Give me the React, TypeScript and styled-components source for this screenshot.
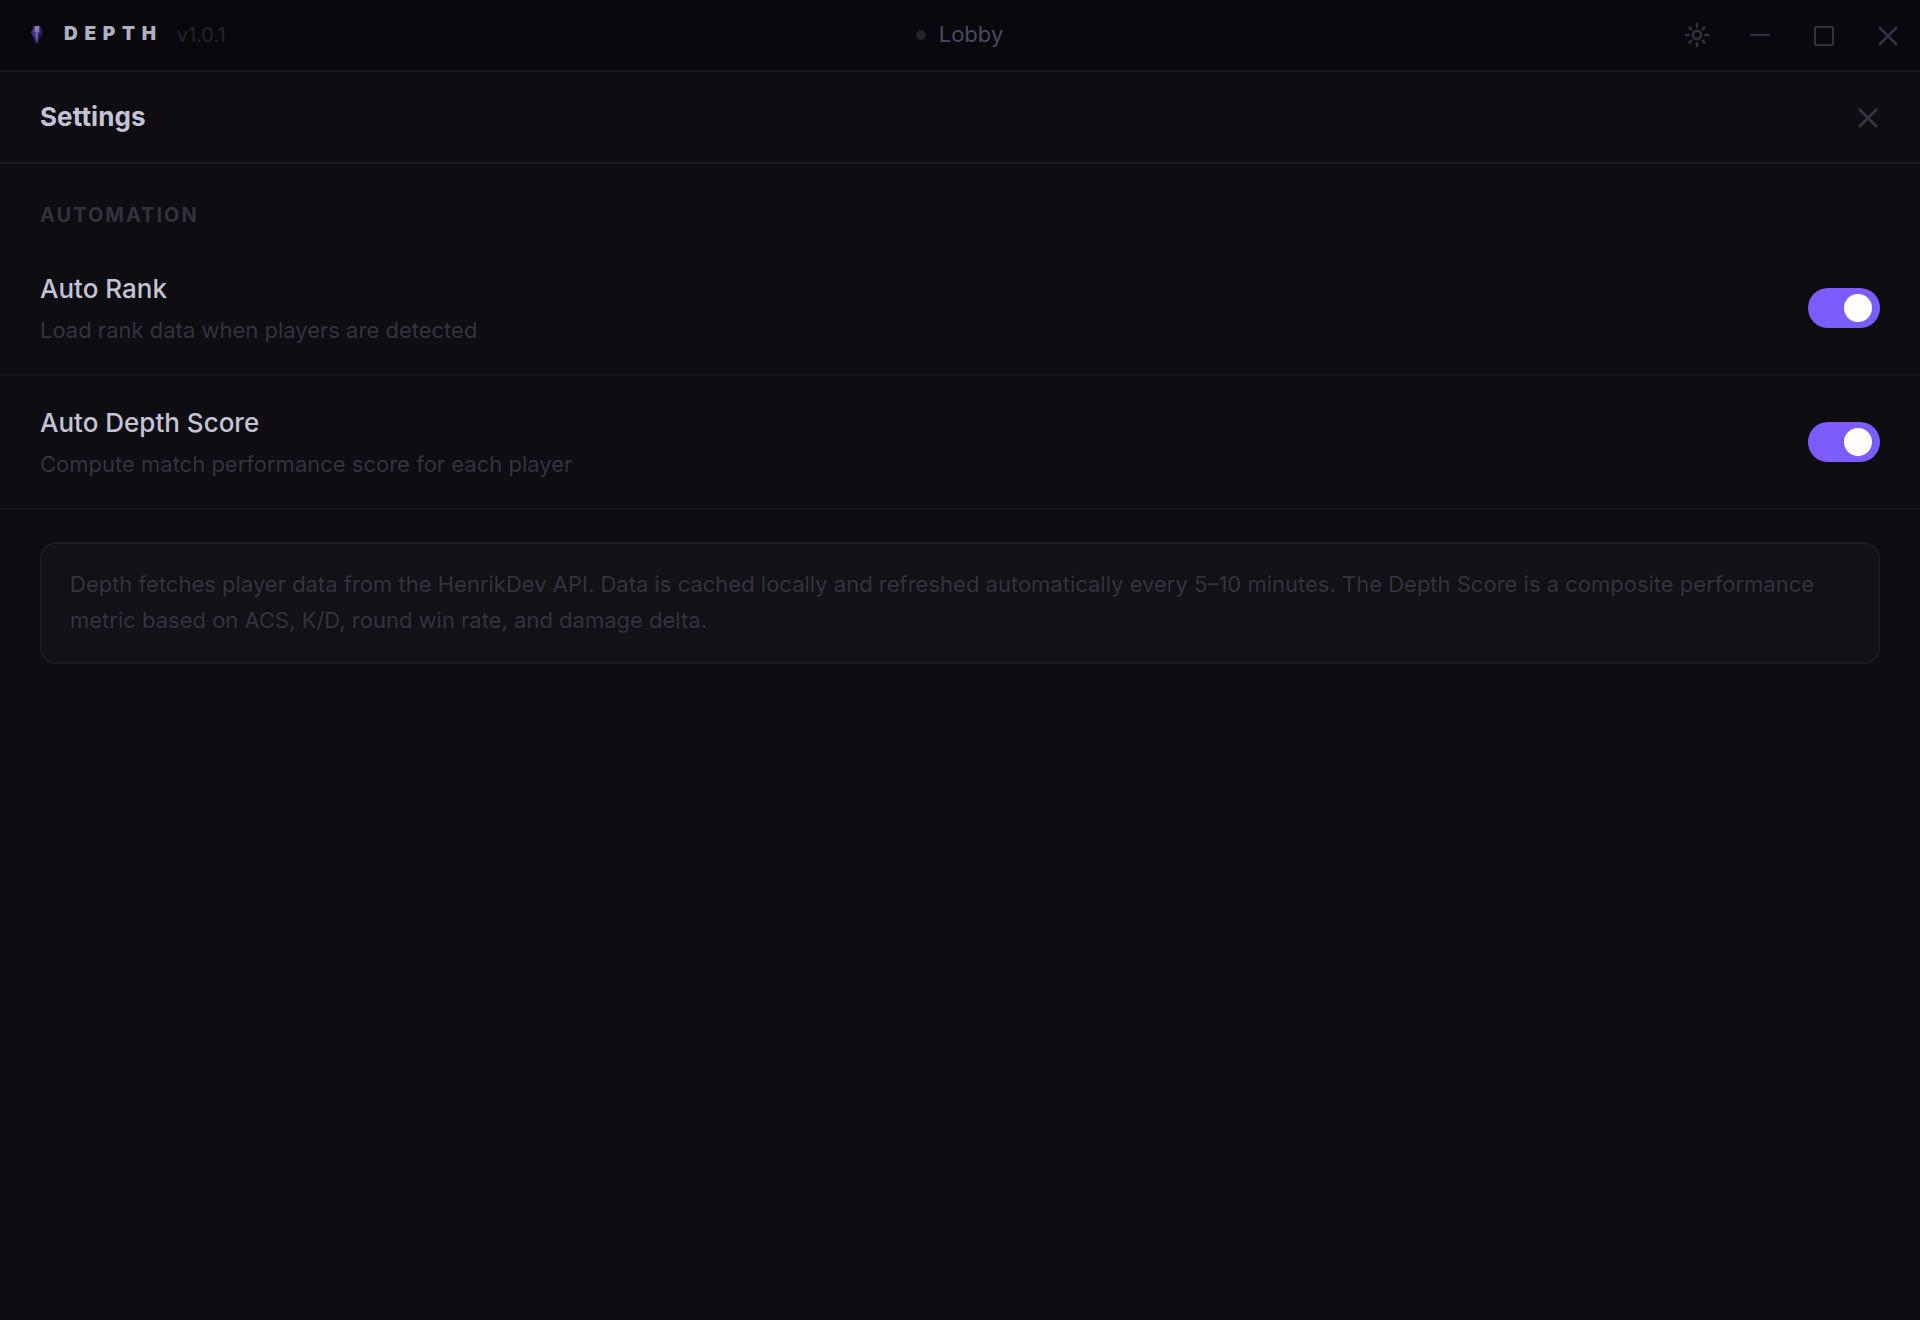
import React, { useState } from "react";
import styled, { createGlobalStyle } from "styled-components";

const GlobalStyle = createGlobalStyle`
  *, *::before, *::after { box-sizing: border-box; }
  html, body { margin: 0; padding: 0; background: #0d0d12; }
  body { font-family: Inter, "Liberation Sans", sans-serif; overflow: hidden; }
  button { font: inherit; color: inherit; background: none; border: 0; padding: 0; }
`;

const Window = styled.div`
  display: flex;
  flex-direction: column;
  height: 100vh;
  background: #0d0d12;
`;

const TitleBar = styled.header`
  display: grid;
  grid-template-columns: 1fr auto 1fr;
  align-items: center;
  height: 72px;
  flex: none;
  background: #08080d;
  border-bottom: 2px solid #1a1a24;
`;

const Brand = styled.div`
  display: flex;
  align-items: center;
  padding-left: 30px;
`;

const BrandName = styled.span`
  margin: -2px 0 0 20px;
  font-size: 19px;
  line-height: 24px;
  font-weight: 900;
  letter-spacing: 6.7px;
  color: #b0b0c0;
`;

const Version = styled.span`
  margin-left: 14px;
  font-size: 20px;
  line-height: 24px;
  color: #24242e;
`;

const Status = styled.div`
  display: flex;
  align-items: center;
  gap: 13px;
  margin: -2px 0 0 -1px;
  font-size: 22px;
  line-height: 28px;
  color: #4a4a62;
`;

const StatusDot = styled.span`
  width: 10px;
  height: 10px;
  margin-top: 2px;
  border-radius: 50%;
  background: #22222a;
`;

const WindowControls = styled.div`
  display: flex;
  justify-content: flex-end;
`;

const ControlButton = styled.button`
  display: flex;
  align-items: center;
  justify-content: center;
  width: 64px;
  height: 70px;
  color: #313140;
`;

const PanelHeader = styled.div`
  display: flex;
  align-items: center;
  justify-content: space-between;
  flex: none;
  height: 92px;
  padding: 0 40px;
  border-bottom: 2px solid #1a1a24;
`;

const PanelTitle = styled.h1`
  margin: 0;
  font-size: 26px;
  line-height: 32px;
  font-weight: 700;
  letter-spacing: 0.1px;
  color: #c4c4d6;
`;

const CloseButton = styled.button`
  display: flex;
  margin-right: 2px;
  color: #363640;
`;

const SectionLabel = styled.h2`
  margin: 0;
  padding: 39px 40px 15px;
  font-size: 20px;
  line-height: 24px;
  font-weight: 700;
  letter-spacing: 2px;
  text-transform: uppercase;
  color: #32323d;
`;

const SettingRow = styled.div`
  display: flex;
  align-items: center;
  justify-content: space-between;
  height: 134px;
  padding: 0 40px;
  border-bottom: 2px solid #121219;
`;

const SettingText = styled.div`
  display: flex;
  flex-direction: column;
  gap: 11px;
  padding-top: 1px;
`;

const SettingName = styled.span`
  font-size: 26px;
  line-height: 32px;
  font-weight: 500;
  color: #c4c4d6;
`;

const SettingHint = styled.span`
  font-size: 22px;
  line-height: 28px;
  color: #33333e;
`;

const Track = styled.button<{ $on: boolean }>`
  display: flex;
  align-items: center;
  justify-content: ${(p) => (p.$on ? "flex-end" : "flex-start")};
  width: 72px;
  height: 40px;
  padding: 0 8px;
  border-radius: 20px;
  background: ${(p) => (p.$on ? "#7c5cfc" : "#22222c")};
`;

const Knob = styled.span`
  width: 28px;
  height: 28px;
  border-radius: 50%;
  background: #fff;
`;

const InfoBox = styled.p`
  margin: 32px 40px 0;
  padding: 22px 28px 24px;
  border: 2px solid #1a1a24;
  border-radius: 16px;
  background: #111116;
  font-size: 22px;
  line-height: 36px;
  color: #33333e;
`;

const Gem = () => (
  <svg width="14" height="20" viewBox="0 0 14 20">
    <path d="M4 1h6l3 6.5L7 19 1 7.5z" fill="#3a2668" />
    <path d="M4.5 1h5v6.5h-5z" fill="#8b78b4" />
    <path d="M4.5 1v6.5H1z" fill="#49307f" />
    <path d="M9.5 1v6.5H13z" fill="#2f1d5c" />
    <path d="M1 7.5h4L7 19z" fill="#41307c" />
    <path d="M5 7.5h4L7 19z" fill="#705bac" />
    <path d="M9 7.5h4L7 19z" fill="#25164a" />
  </svg>
);

const SunIcon = () => (
  <svg width="28" height="26" viewBox="-2 0 28 26" fill="none" stroke="currentColor" strokeWidth="2.6" strokeLinecap="round">
    <circle cx="13" cy="13" r="4.1" />
    <path d="M13 1.9v2.8M13 21.3v2.8M1.9 13h2.8M21.3 13h2.8M5.5 5.5l1.9 1.9M18.6 18.6l1.9 1.9M20.5 5.5l-1.9 1.9M7.4 18.6l-1.9 1.9" />
  </svg>
);

const MinimizeIcon = () => (
  <svg width="20" height="20" viewBox="0 0 20 20">
    <rect y="9" width="20" height="2" rx="0.8" fill="currentColor" />
  </svg>
);

const MaximizeIcon = () => (
  <svg width="20" height="22" viewBox="0 0 20 22" fill="none" stroke="currentColor" strokeWidth="2">
    <rect x="1" y="3" width="18" height="18" rx="0.4" />
  </svg>
);

const CrossIcon = () => (
  <svg width="20" height="22" viewBox="0 0 20 22" stroke="currentColor" strokeWidth="2.7" strokeLinecap="round">
    <path d="M1.8 3.8l16.4 16.4M18.2 3.8L1.8 20.2" />
  </svg>
);

const Toggle = ({ label }: { label: string }) => {
  const [on, setOn] = useState(true);
  return (
    <Track $on={on} role="switch" aria-checked={on} aria-label={label} onClick={() => setOn(!on)}>
      <Knob />
    </Track>
  );
};

const settings = [
  { name: "Auto Rank", hint: "Load rank data when players are detected" },
  { name: "Auto Depth Score", hint: "Compute match performance score for each player" },
];

export default function App() {
  return (
    <Window>
      <GlobalStyle />
      <TitleBar>
        <Brand>
          <Gem />
          <BrandName>DEPTH</BrandName>
          <Version>v1.0.1</Version>
        </Brand>
        <Status>
          <StatusDot />
          Lobby
        </Status>
        <WindowControls>
          <ControlButton aria-label="Settings"><SunIcon /></ControlButton>
          <ControlButton aria-label="Minimize"><MinimizeIcon /></ControlButton>
          <ControlButton aria-label="Maximize"><MaximizeIcon /></ControlButton>
          <ControlButton aria-label="Close"><CrossIcon /></ControlButton>
        </WindowControls>
      </TitleBar>
      <PanelHeader>
        <PanelTitle>Settings</PanelTitle>
        <CloseButton aria-label="Close settings"><CrossIcon /></CloseButton>
      </PanelHeader>
      <main>
        <SectionLabel>Automation</SectionLabel>
        {settings.map((s) => (
          <SettingRow key={s.name}>
            <SettingText>
              <SettingName>{s.name}</SettingName>
              <SettingHint>{s.hint}</SettingHint>
            </SettingText>
            <Toggle label={s.name} />
          </SettingRow>
        ))}
        <InfoBox>
          Depth fetches player data from the HenrikDev API. Data is cached locally and refreshed automatically every
          5–10 minutes. The Depth Score is a composite performance metric based on ACS, K/D, round win rate, and damage
          delta.
        </InfoBox>
      </main>
    </Window>
  );
}
